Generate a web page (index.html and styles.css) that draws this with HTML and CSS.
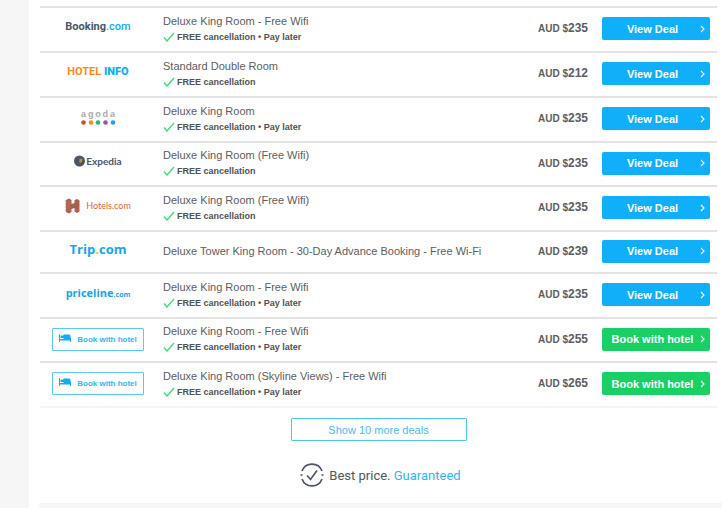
FILE: index.html
```html
<!DOCTYPE html>
<html lang="en">
<head>
<meta charset="utf-8">
<title>Hotel deals</title>
<link rel="stylesheet" href="styles.css">
</head>
<body>
<svg class="defs" width="0" height="0" aria-hidden="true">
  <symbol id="tick" viewBox="0 0 12 10"><path d="M1 5.5 4 9 11 1" fill="none" stroke="#3fdc7c" stroke-width="1.4"/></symbol>
  <symbol id="chevron" viewBox="0 0 5 8"><path d="M1 1 4 4 1 7" fill="none" stroke="#fff" stroke-width="1.1"/></symbol>
  <symbol id="bed" viewBox="0 0 12 8"><path d="M0 0h1v5h10V3.500h1V8h-1V6.500H1V8H0zM1.500 1.500h3V4h-3zM4.500 .5h5.500q1.500 0 1.500 1.500v3h-7z" fill="#10aff5"/></symbol>
</svg>
<main class="panel">
  <ul class="deals">
    <li class="deal">
      <div class="brand booking"><span>Booking<b>.com</b></span></div>
      <div class="info"><div class="room">Deluxe King Room - Free Wifi</div><div class="perk"><svg class="tick"><use href="#tick"/></svg>FREE cancellation • Pay later</div></div>
      <div class="price">AUD $<strong>235</strong></div>
      <button class="cta"><span>View Deal</span><svg class="chevron"><use href="#chevron"/></svg></button>
    </li>
    <li class="deal">
      <div class="brand hotelinfo"><span>HOTEL <b>INFO</b></span></div>
      <div class="info"><div class="room">Standard Double Room</div><div class="perk"><svg class="tick"><use href="#tick"/></svg>FREE cancellation</div></div>
      <div class="price">AUD $<strong>212</strong></div>
      <button class="cta"><span>View Deal</span><svg class="chevron"><use href="#chevron"/></svg></button>
    </li>
    <li class="deal">
      <div class="brand agoda">
        <div class="agoda-name"><span>a</span><span>g</span><span>o</span><span>d</span><span>a</span></div>
        <svg width="35" height="5" viewBox="0 0 35 5"><circle cx="2.500" cy="2.500" r="2.300" fill="#c9502e"/><circle cx="10" cy="2.500" r="2.300" fill="#f08a24"/><circle cx="17" cy="2.500" r="2.300" fill="#22b573"/><circle cx="24.500" cy="2.500" r="2.300" fill="#a04bc0"/><circle cx="32" cy="2.500" r="2.300" fill="#1ea1ea"/></svg>
      </div>
      <div class="info"><div class="room">Deluxe King Room</div><div class="perk"><svg class="tick"><use href="#tick"/></svg>FREE cancellation • Pay later</div></div>
      <div class="price">AUD $<strong>235</strong></div>
      <button class="cta"><span>View Deal</span><svg class="chevron"><use href="#chevron"/></svg></button>
    </li>
    <li class="deal snug">
      <div class="brand expedia"><svg width="11" height="12" viewBox="0 0 11 12"><circle cx="5.500" cy="6" r="5.500" fill="#4c5463"/><path d="m5.500 3.500 3 .5-.5 3-2.500 1z" fill="#b79a2c"/></svg><span>Expedia</span></div>
      <div class="info"><div class="room">Deluxe King Room (Free Wifi)</div><div class="perk"><svg class="tick"><use href="#tick"/></svg>FREE cancellation</div></div>
      <div class="price">AUD $<strong>235</strong></div>
      <button class="cta"><span>View Deal</span><svg class="chevron"><use href="#chevron"/></svg></button>
    </li>
    <li class="deal">
      <div class="brand hotels"><svg width="15" height="16" viewBox="0 0 15 16"><path d="M1 2 4 .5 6.500 2v4l3-1V2L12 1l2.500 1.500v11L12 15l-2.500-1.500V10l-3 1v3L4 15.500 1 14z" fill="#a9604f"/><path d="M1 2v12" fill="none" stroke="#dc7a56" stroke-dasharray="2 1"/><path d="M4 3v10" fill="none" stroke="#c98672" stroke-width=".6"/></svg><span>Hotels.com</span></div>
      <div class="info"><div class="room">Deluxe King Room (Free Wifi)</div><div class="perk"><svg class="tick"><use href="#tick"/></svg>FREE cancellation</div></div>
      <div class="price">AUD $<strong>235</strong></div>
      <button class="cta"><span>View Deal</span><svg class="chevron"><use href="#chevron"/></svg></button>
    </li>
    <li class="deal single">
      <div class="brand trip"><span>Trip<b>.</b>com</span></div>
      <div class="info"><div class="room">Deluxe Tower King Room - 30-Day Advance Booking - Free Wi-Fi</div></div>
      <div class="price">AUD $<strong>239</strong></div>
      <button class="cta"><span>View Deal</span><svg class="chevron"><use href="#chevron"/></svg></button>
    </li>
    <li class="deal">
      <div class="brand priceline"><span>priceline<small>.com</small></span></div>
      <div class="info"><div class="room">Deluxe King Room - Free Wifi</div><div class="perk"><svg class="tick"><use href="#tick"/></svg>FREE cancellation • Pay later</div></div>
      <div class="price">AUD $<strong>235</strong></div>
      <button class="cta"><span>View Deal</span><svg class="chevron"><use href="#chevron"/></svg></button>
    </li>
    <li class="deal snug">
      <div class="brand-action"><button class="direct"><svg class="bed"><use href="#bed"/></svg>Book with hotel</button></div>
      <div class="info"><div class="room">Deluxe King Room - Free Wifi</div><div class="perk"><svg class="tick"><use href="#tick"/></svg>FREE cancellation • Pay later</div></div>
      <div class="price">AUD $<strong>255</strong></div>
      <button class="cta book"><span>Book with hotel</span><svg class="chevron"><use href="#chevron"/></svg></button>
    </li>
    <li class="deal">
      <div class="brand-action"><button class="direct"><svg class="bed"><use href="#bed"/></svg>Book with hotel</button></div>
      <div class="info"><div class="room">Deluxe King Room (Skyline Views) - Free Wifi</div><div class="perk"><svg class="tick"><use href="#tick"/></svg>FREE cancellation • Pay later</div></div>
      <div class="price">AUD $<strong>265</strong></div>
      <button class="cta book"><span>Book with hotel</span><svg class="chevron"><use href="#chevron"/></svg></button>
    </li>
  </ul>
  <div class="more-row"><button class="more">Show 10 more deals</button></div>
  <div class="promise">
    <svg width="24" height="24" viewBox="0 0 24 24" fill="none" stroke="#4d5566" stroke-width="1.700"><path d="M2 8a10.700 10.700 0 0 1 20 0M2 16a10.700 10.700 0 0 0 20 0M.5 12h2M21.500 12h2"/><path d="m7 12.500 3.500 4L17 7.500"/></svg>
    <span>Best price. <a href="#">Guaranteed</a></span>
  </div>
  <div class="next-section"></div>
</main>
</body>
</html>
```
FILE: styles.css
```css
* { box-sizing: border-box; }
body {
  margin: 0;
  background: #f6f6f6;
  font-family: "Liberation Sans", Arial, sans-serif;
  font-size: 11px;
  line-height: 16px;
  color: #5c5d60;
}
button { font-family: inherit; cursor: pointer; }
.defs { display: block; }
.panel {
  display: flex;
  flex-direction: column;
  min-height: 100vh;
  margin-left: 29px;
  padding: 6px 5px 0 11px;
  background: #fff;
}
.deals {
  margin: 0;
  padding: 0;
  list-style: none;
  border-bottom: 2px solid #f3f3f3;
}
.deal {
  display: grid;
  grid-template-columns: 116px 1fr auto 108px;
  align-items: center;
  height: 45px;
  padding: 0 7px 2px 0;
  border-top: 2px solid #e3e3e3;
}
.snug { height: 44px; }
.single { height: 42px; }
.brand, .brand-action {
  display: flex;
  align-items: center;
  justify-content: center;
  white-space: nowrap;
}
.brand { padding-bottom: 4px; }
.info { padding-left: 7px; }
.perk {
  display: flex;
  align-items: center;
  gap: 2px;
  font-size: 9px;
  font-weight: bold;
  color: #505154;
}
.tick { width: 12px; height: 10px; }
.price {
  padding-right: 14px;
  font-size: 10px;
  font-weight: bold;
}
.price strong { font-size: 12px; }
.cta {
  display: flex;
  align-items: center;
  height: 23px;
  padding: 0 5px 0 3px;
  border: 0;
  border-radius: 2px;
  background: #10aff9;
  color: #fff;
  font-size: 11px;
  font-weight: bold;
}
.cta span { flex: 1; white-space: nowrap; }
.book { background: #18d064; }
.chevron { width: 5px; height: 8px; }
.booking { font: bold 11px Roboto, sans-serif; color: #48566e; }
.booking b { color: #12aaf4; font-weight: 500; }
.hotelinfo { font: bold 11px Roboto, sans-serif; color: #ff8a1c; }
.hotelinfo b { color: #10aff5; }
.agoda { flex-direction: column; gap: 1px; padding-bottom: 2px; }
.agoda-name {
  display: flex;
  justify-content: space-between;
  width: 34px;
  font-size: 9px;
  font-weight: bold;
  line-height: 9px;
  color: #aaa;
}
.expedia { gap: 1px; font: bold 10px Lato, sans-serif; color: #46566e; }
.hotels { gap: 6px; font: 9px Lato, sans-serif; color: #e06637; }
.trip { font: bold 13px "Open Sans", sans-serif; color: #15a6ef; }
.trip b { color: #ffc83d; }
.priceline { font: bold 11px "Open Sans", sans-serif; color: #15a6e8; }
.priceline small { font-size: 7px; }
.direct {
  display: flex;
  align-items: center;
  justify-content: center;
  gap: 6px;
  width: 92px;
  height: 23px;
  padding: 0;
  border: 1px solid #5cc8fa;
  border-radius: 1px;
  background: #fff;
  color: #2fb5f6;
  font-size: 8px;
  font-weight: bold;
}
.bed { width: 12px; height: 8px; margin-bottom: 3px; }
.more-row { display: flex; justify-content: center; padding: 10px 0 0; }
.more {
  width: 176px;
  height: 23px;
  border: 1px solid #4cc3fa;
  border-radius: 1px;
  background: #fff;
  color: #48bcf3;
  font-size: 11px;
}
.promise {
  display: flex;
  align-items: center;
  justify-content: center;
  gap: 5px;
  padding: 22px 0 16px 4px;
  font: 13px Roboto, sans-serif;
  color: #4d5566;
}
.promise a { color: #2fb5f6; text-decoration: none; }
.next-section { flex: 1; margin: 0 -5px 0 -1px; background: #f6f6f6; }
```
